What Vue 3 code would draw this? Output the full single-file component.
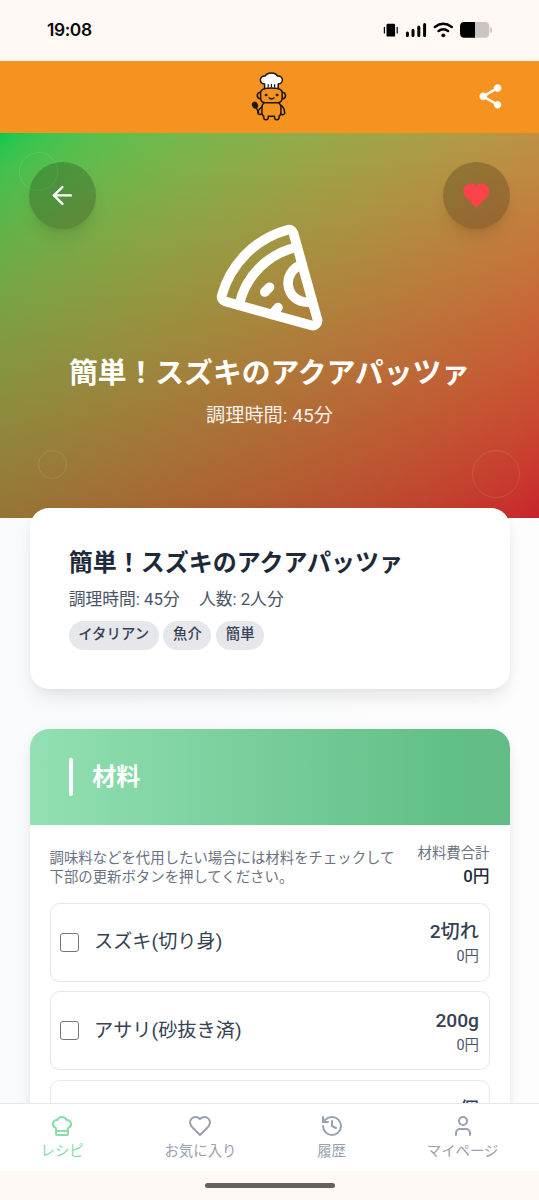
<script setup>
const tags = ['イタリアン', '魚介', '簡単']
const ingredients = [
  { name: 'スズキ(切り身)', amount: '2切れ', price: '0円' },
  { name: 'アサリ(砂抜き済)', amount: '200g', price: '0円' },
  { name: 'ミニトマト', amount: '10個', price: '0円' }
]
const tabs = [
  {
    label: 'レシピ',
    active: true,
    paths: [
      'M17 21a1 1 0 0 0 1-1v-5.35c0-.457.316-.844.727-1.041a4 4 0 0 0-2.134-7.589 5 5 0 0 0-9.186 0 4 4 0 0 0-2.134 7.588c.411.198.727.585.727 1.041V20a1 1 0 0 0 1 1Z',
      'M6 17h12'
    ]
  },
  {
    label: 'お気に入り',
    paths: [
      'M19 14c1.49-1.46 3-3.21 3-5.5A5.5 5.5 0 0 0 16.5 3c-1.76 0-3 .5-4.5 2-1.5-1.5-2.74-2-4.5-2A5.5 5.5 0 0 0 2 8.5c0 2.3 1.5 4.05 3 5.5l7 7Z'
    ]
  },
  {
    label: '履歴',
    paths: ['M3 12a9 9 0 1 0 9-9 9.75 9.75 0 0 0-6.74 2.74L3 8', 'M3 3v5h5', 'M12 7v5l4 2']
  },
  {
    label: 'マイページ',
    paths: ['M19 21v-2a4 4 0 0 0-4-4H9a4 4 0 0 0-4 4v2', 'M8 7a4 4 0 1 0 8 0a4 4 0 1 0-8 0']
  }
]
</script>

<template>
  <div class="screen">
    <div class="status">
      <span class="clock">19:08</span>
      <svg class="status-icons" width="112" height="20" viewBox="3 0 112 20">
        <rect x="6.500" y="3.800" width="8.600" height="12.800" rx="1.200" />
        <path d="M4.400 7v6.600M17.200 7v6.600" stroke="#000" stroke-width="1.200" />
        <path d="M27.400 13v2.600M33 10.200v5.400M38.800 7v8.600M44.600 4.400v11.200" stroke="#000" stroke-width="3" stroke-linecap="round" />
        <g fill="none" stroke="#000" stroke-width="2.300" stroke-linecap="round">
          <path d="M54.800 7q8.500-6.400 17 0M58.500 11q4.800-3.600 9.600 0" />
        </g>
        <circle cx="63.300" cy="15.300" r="1.900" />
        <path d="M94.900 1.900h10q4.400 0 4.400 4.400v7q0 4.400-4.400 4.400h-10z" fill="#cbc4c1" />
        <path d="M95 1.900v15.800H84.400q-4.400 0-4.400-4.400v-7q0-4.400 4.400-4.400z" />
        <path d="M110.200 7.200q1.800 0 1.800 1.500v2.600q0 1.500-1.800 1.500z" fill="#cbc4c1" />
      </svg>
    </div>

    <header class="topbar">
      <svg class="mascot" width="42" height="54" viewBox="0 0 42 54" fill="none" stroke="#1d1710" stroke-width="1.500" stroke-linecap="round" stroke-linejoin="round">
        <path d="M14.600 18.600V13.900c-5.600-.3-5.700-8.300.6-7.900 2.200-3.800 10-3.900 12.300 0 6.300-.5 6.400 7.600.7 7.900v4.700Q21.400 17.400 14.600 18.600z" fill="#fff" />
        <path d="M18.200 14.600v2.600M21.400 14.400v2.600M24.600 14.600v2.600" stroke-width="1.200" />
        <path d="M14.600 18.800q-4 .8-4 4.400v4.600q0 5 5 5h11.600q5 0 5-5v-4.600q0-3.600-4-4.400" />
        <path d="M10.200 22.200q-2.900.3-2.900 3.300t2.900 3.300M32.600 22.200q2.900.3 2.900 3.300t-2.900 3.300" />
        <circle cx="16" cy="25" r="1" fill="#1d1710" stroke-width=".8" />
        <circle cx="27" cy="25" r="1" fill="#1d1710" stroke-width=".8" />
        <path d="M18.900 27.800q2.600 2.400 5.200 0" stroke-width="1.200" />
        <path d="M13.800 33q-1.900 1.700-1.900 4.700v4.800q0 3 1.800 3.400v1.900q.2 2 2.300 2t2.300-2v-1.500h6.200v1.500q.2 2 2.300 2t2.300-2v-1.900q1.800-.4 1.800-3.400v-4.800q0-3-1.900-4.700" />
        <path d="M11.900 36.800q-3.600 2.500-4.200 5.800.7 2.700 4 1.400M30.900 35.200q3.500 2.700 3.900 7.800-.9 2.500-3.800 1.200" />
        <ellipse cx="5" cy="35.200" rx="2.200" ry="2.900" transform="rotate(-28 5 35.200)" fill="#1d1710" />
        <path d="M6.400 38l2.200 4.600" />
      </svg>
      <svg class="share" width="28.800" height="28.800" viewBox="0 0 24 24" fill="#fff">
        <path d="M18 16.080c-.76 0-1.440.3-1.960.77L8.910 12.700c.05-.23.09-.46.09-.7s-.04-.47-.09-.7l7.050-4.110c.54.5 1.250.81 2.040.81 1.660 0 3-1.340 3-3s-1.340-3-3-3-3 1.340-3 3c0 .24.04.47.09.7L8.040 9.810C7.500 9.310 6.790 9 6 9c-1.660 0-3 1.340-3 3s1.340 3 3 3c.79 0 1.500-.31 2.040-.81l7.120 4.160c-.05.21-.08.43-.08.650 0 1.610 1.310 2.920 2.920 2.920s2.920-1.310 2.920-2.920-1.310-2.920-2.920-2.920z" stroke="#fff" stroke-width=".35" />
      </svg>
    </header>

    <section class="hero">
      <i class="ring ring-a"></i>
      <i class="ring ring-b"></i>
      <i class="ring ring-c"></i>
      <button class="round back" aria-label="戻る">
        <svg width="28.800" height="28.800" viewBox="0 0 24 24" class="line"><path d="m12 19-7-7 7-7" /><path d="M19 12H5" /></svg>
      </button>
      <button class="round fav" aria-label="お気に入り">
        <svg width="28.800" height="28.800" viewBox="0 0 24 24" class="line loved"><path :d="tabs[1].paths[0]" /></svg>
      </button>
      <svg class="pizza line" width="115.200" height="115.200" viewBox="0 0 24 24">
        <path d="m12 14-1 1" />
        <path d="m13.750 18.250-1.250 1.420" />
        <path d="M17.775 5.654a15.680 15.680 0 0 0-12.121 12.120" />
        <path d="M18.800 9.300a1 1 0 0 0 2.100 7.700" />
        <path d="M21.964 20.732a1 1 0 0 1-1.232 1.232l-18-5a1 1 0 0 1-.695-1.232A19.680 19.680 0 0 1 15.732 2.037a1 1 0 0 1 1.232.695z" />
      </svg>
      <h1>簡単！スズキのアクアパッツァ</h1>
      <p>調理時間: 45分</p>
    </section>

    <main class="content">
      <section class="card summary">
        <h2>簡単！スズキのアクアパッツァ</h2>
        <div class="meta"><span>調理時間: 45分</span><span>人数: 2人分</span></div>
        <div class="tags"><span v-for="t in tags" :key="t">{{ t }}</span></div>
      </section>

      <section class="card ingredients">
        <div class="card-head"><i></i><h3>材料</h3></div>
        <div class="card-body">
          <div class="note">
            <p>調味料などを代用したい場合には材料をチェックして<br />下部の更新ボタンを押してください。</p>
            <div class="total"><span>材料費合計</span><b>0円</b></div>
          </div>
          <div v-for="item in ingredients" :key="item.name" class="row">
            <i class="box"></i>
            <span class="name">{{ item.name }}</span>
            <div class="qty"><b>{{ item.amount }}</b><span>{{ item.price }}</span></div>
          </div>
        </div>
      </section>
    </main>

    <nav class="tabs">
      <div v-for="tab in tabs" :key="tab.label" class="tab" :class="{ active: tab.active }">
        <svg width="24" height="24" viewBox="0 0 24 24"><path v-for="d in tab.paths" :key="d" :d="d" /></svg>
        <span>{{ tab.label }}</span>
      </div>
    </nav>
    <div class="gesture"><i></i></div>
  </div>
</template>

<style>
body {
  background: #fff8f5;
  overflow: hidden;
}
</style>

<style scoped>
* {
  box-sizing: border-box;
}
.screen {
  width: 539px;
  height: 1200px;
  display: flex;
  flex-direction: column;
  overflow: hidden;
  background: #fff8f5;
  font-family: Roboto, 'Noto Sans CJK JP', sans-serif;
}
h1, h2, h3, p {
  margin: 0;
}
.status {
  flex: none;
  height: 60.500px;
  padding: 0 44px 0 47px;
  display: flex;
  align-items: center;
  justify-content: space-between;
}
.clock {
  font: 600 17.400px/20px Inter, sans-serif;
  letter-spacing: -.4px;
  color: #0b0a0a;
}
.topbar {
  flex: none;
  height: 72px;
  background: #f69220;
  position: relative;
  display: flex;
  align-items: center;
  justify-content: center;
}
.mascot {
  margin-left: 3.600px;
}
.share {
  position: absolute;
  right: 34px;
  top: 21.700px;
}
.hero {
  flex: none;
  height: 385px;
  position: relative;
  display: flex;
  flex-direction: column;
  align-items: center;
  padding-top: 87.500px;
  color: #fff;
  background:
    linear-gradient(to top, rgba(0, 0, 0, .2), transparent),
    linear-gradient(to bottom right in oklab, #00c950, #fb2c36);
}
.line {
  fill: none;
  stroke: #fff;
  stroke-width: 2;
  stroke-linecap: round;
  stroke-linejoin: round;
}
.loved {
  fill: #f9444a;
  stroke: #f9444a;
}
.round {
  position: absolute;
  top: 29px;
  width: 67.200px;
  height: 67.200px;
  border: 0;
  padding: 0;
  border-radius: 50%;
  display: flex;
  align-items: center;
  justify-content: center;
  background: rgba(0, 0, 0, .2);
  box-shadow: 0 12px 18px -4px rgba(0, 0, 0, .1), 0 5px 7px -5px rgba(0, 0, 0, .1);
}
.back {
  left: 28.800px;
}
.fav {
  right: 28.800px;
}
.ring {
  position: absolute;
  border: 1.500px solid rgba(255, 255, 255, .1);
  border-radius: 50%;
}
.ring-a {
  left: 19px;
  top: 19px;
  width: 39px;
  height: 39px;
}
.ring-b {
  left: 38px;
  top: 317.500px;
  width: 29px;
  height: 29px;
}
.ring-c {
  right: 19px;
  top: 317.500px;
  width: 48px;
  height: 48px;
}
.hero h1 {
  margin-top: 18.500px;
  font-size: 28.800px;
  line-height: 38.400px;
  font-weight: 700;
  white-space: nowrap;
}
.hero p {
  margin-top: 9.500px;
  font-size: 19.200px;
  line-height: 28.800px;
  opacity: .9;
}
.content {
  flex: 1;
  min-height: 0;
  padding: 0 29.500px;
  background: linear-gradient(90deg, #f9fafc, #fdfdfd);
}
.card {
  position: relative;
  border-radius: 19.200px;
  background: #fff;
  box-shadow: 0 12px 18px -4px rgba(0, 0, 0, .09), 0 0 12px rgba(0, 0, 0, .035);
}
.summary {
  margin-top: -9.500px;
  height: 181px;
  padding: 39px 39.200px 0;
}
.summary h2 {
  font-size: 24px;
  line-height: 32px;
  font-weight: 700;
  color: #1e2939;
}
.meta {
  display: flex;
  gap: 19.200px;
  margin-top: 8px;
  font-size: 16.800px;
  line-height: 24px;
  color: #4a5565;
}
.tags {
  display: flex;
  gap: 4.800px;
  margin-top: 10px;
}
.tags span {
  height: 29px;
  padding: 0 9.600px;
  border-radius: 15px;
  background: #e5e7eb;
  color: #364153;
  font-size: 14.400px;
  line-height: 28.800px;
  font-weight: 500;
}
.ingredients {
  margin-top: 39.500px;
  height: 500px;
  overflow: hidden;
}
.card-head {
  height: 96.500px;
  padding-left: 39px;
  display: flex;
  align-items: center;
  gap: 19px;
  background: linear-gradient(90deg, #92e0b3, #62bf87 87%, #62bc85);
}
.card-head i {
  width: 4.800px;
  height: 38.400px;
  border-radius: 3px;
  background: #fff;
}
.card-head h3 {
  font-size: 24px;
  line-height: 32px;
  font-weight: 700;
  color: #fff;
}
.card-body {
  padding: 18.500px 20px;
}
.note {
  height: 59px;
  display: flex;
  align-items: flex-start;
  justify-content: space-between;
}
.note p {
  padding-top: 5.500px;
  font-size: 14.400px;
  line-height: 19.200px;
  color: #6a7282;
  white-space: nowrap;
}
.total {
  display: flex;
  flex-direction: column;
  align-items: flex-end;
  color: #1e2939;
}
.total span {
  font-size: 14.400px;
  line-height: 20px;
  color: #6a7282;
}
.total b {
  font-size: 16.800px;
  line-height: 25px;
  font-weight: 500;
}
.row {
  height: 79px;
  margin-bottom: 9.800px;
  padding: 0 9.500px;
  border: 1.200px solid #e5e7eb;
  border-radius: 9.600px;
  display: flex;
  align-items: center;
}
.box {
  width: 19px;
  height: 19px;
  border: 1.200px solid #767676;
  border-radius: 3px;
}
.name {
  flex: 1;
  margin-left: 15px;
  font-size: 19.200px;
  line-height: 28px;
  color: #364153;
}
.qty {
  display: flex;
  flex-direction: column;
  align-items: flex-end;
  color: #4a5565;
}
.qty b {
  font-size: 19.200px;
  line-height: 28.800px;
  font-weight: 500;
  color: #364153;
}
.qty span {
  font-size: 14.400px;
  line-height: 19.200px;
}
.tabs {
  flex: none;
  position: relative;
  height: 68px;
  padding: 0 20.500px;
  display: flex;
  justify-content: space-between;
  background: #fff;
  border-top: 1px solid #e5e7eb;
}
.tab {
  padding: 9.500px 20px 0;
  display: flex;
  flex-direction: column;
  align-items: center;
  gap: 2.500px;
  color: #99a1af;
  font-size: 14.400px;
  line-height: 24px;
}
.tab svg {
  flex: none;
  fill: none;
  stroke: currentColor;
  stroke-width: 2;
  stroke-linecap: round;
  stroke-linejoin: round;
}
.tab.active {
  color: #8adcab;
}
.gesture {
  flex: none;
  position: relative;
  height: 29px;
  display: flex;
  align-items: center;
  justify-content: center;
  background: #fff8f5;
}
.gesture i {
  width: 130px;
  height: 4.500px;
  border-radius: 3px;
  background: #65605e;
}
</style>
